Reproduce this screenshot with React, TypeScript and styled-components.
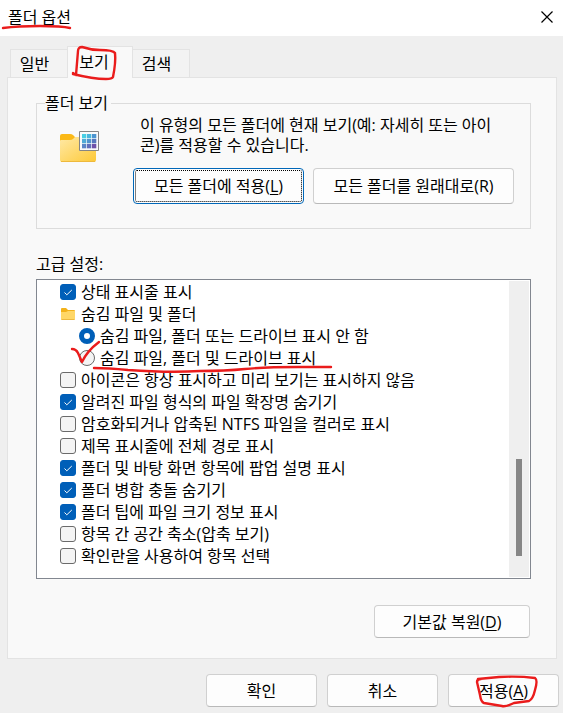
import React, { useState } from "react";
import styled, { createGlobalStyle, css } from "styled-components";

const GlobalStyle = createGlobalStyle`
  *, *::before, *::after { box-sizing: border-box; }
  body {
    margin: 0;
    background: #efefef;
    color: #000;
    font-family: "Open Sans", "Noto Sans CJK KR", sans-serif;
    font-size: 16px;
    line-height: 20px;
  }
  button, input { font: inherit; color: inherit; margin: 0; }
`;

const Dialog = styled.main`
  display: flex;
  flex-direction: column;
  min-height: 100vh;
  background: #efefef;
`;

const TitleBar = styled.header`
  display: flex;
  align-items: center;
  justify-content: space-between;
  height: 36px;
  padding: 0 10px 2px 8px;
  background: #fff;
`;

const Title = styled.h1`
  position: relative;
  margin: 0;
  font-size: 16px;
  font-weight: 400;
`;

const CloseButton = styled.button`
  display: flex;
  padding: 0;
  border: 0;
  background: none;
`;

const Body = styled.div`
  flex: 1;
  display: flex;
  flex-direction: column;
  padding: 10px 6px 0 7px;
`;

const TabList = styled.div`
  display: flex;
  align-items: flex-end;
  padding-left: 3px;
`;

const Tab = styled.button<{ $active?: boolean }>`
  position: relative;
  width: ${(p) => (p.$active ? 66 : 58)}px;
  height: 28px;
  padding: 0 9px 0 0;
  border: 1px solid #e3e3e3;
  border-bottom: 0;
  background: #f3f3f3;
  & + & { margin-left: -1px; }
  ${(p) =>
    p.$active &&
    css`
      z-index: 1;
      height: 32px;
      margin-bottom: -1px;
      padding: 0 12px 2px 0;
      background: #f9f9f9;
    `}
`;

const Panel = styled.section`
  display: flex;
  flex-direction: column;
  padding: 15px 25px 20px 28px;
  border: 1px solid #e3e3e3;
  background: #f9f9f9;
`;

const Group = styled.fieldset`
  min-width: 0;
  margin: 0;
  padding: 2px 16px 24px 96px;
  border: 1px solid #dcdcdc;
  display: grid;
  row-gap: 13px;
  position: relative;
`;

const Legend = styled.legend`
  margin-left: -88px;
  padding: 0 3px 0 0;
`;

const GroupIcon = styled.svg`
  position: absolute;
  left: 22px;
  top: 18px;
`;

const Description = styled.p`
  margin: 0;
  padding: 0 10px 0 7px;
`;

const ButtonRow = styled.div<{ $gap: number }>`
  display: flex;
  gap: ${(p) => p.$gap}px;
`;

const PushButton = styled.button<{ $width: number; $tall?: boolean; $focused?: boolean }>`
  position: relative;
  width: ${(p) => p.$width}px;
  height: ${(p) => (p.$tall ? 36 : 33)}px;
  padding: 0;
  border: 1px solid #d0d0d0;
  border-bottom-color: #b9b9b9;
  border-radius: 4px;
  background: #fdfdfd;
  white-space: nowrap;
  ${(p) =>
    p.$focused &&
    css`
      border-color: #0067b8;
      outline: 1px dotted #000;
      outline-offset: -3px;
    `}
  u { text-underline-offset: 2px; text-decoration-thickness: 1px; }
`;

const ListLabel = styled.h2`
  margin: 25px 0 5px;
  font-size: 16px;
  font-weight: 400;
`;

const ListBox = styled.div`
  display: flex;
  min-height: 300px;
  padding: 1px;
  border: 1px solid #828790;
  background: #fff;
`;

const Rows = styled.ul`
  flex: 1;
  min-width: 0;
  margin: 0;
  padding: 0 0 0 22px;
  list-style: none;
`;

const Row = styled.li<{ $nested?: boolean }>`
  position: relative;
  display: flex;
  align-items: center;
  height: 22px;
  padding-left: ${(p) => (p.$nested ? 19 : 0)}px;
`;

const RowLabel = styled.label`
  display: flex;
  align-items: center;
  gap: 5px;
  white-space: nowrap;
`;

const Mark = styled.span`
  display: grid;
  width: 16px;
  height: 16px;
  > * { grid-area: 1 / 1; }
  svg { pointer-events: none; }
`;

const CheckInput = styled.input`
  appearance: none;
  width: 16px;
  height: 16px;
  border: 1px solid #6a6a6a;
  border-radius: 3px;
  background: #f4f4f4;
  &:checked { border-color: #005fb8; background: #005fb8; }
`;

const RadioInput = styled(CheckInput)`
  border-radius: 50%;
  &:checked { border-width: 5px; background: #fff; }
`;

const ScrollTrack = styled.div`
  display: flex;
  flex-direction: column;
  align-items: center;
  width: 20px;
  background: #efefef;
`;

const ScrollSpace = styled.span<{ $share: number }>`
  flex: ${(p) => p.$share} 0 0;
`;

const ScrollThumb = styled.span`
  flex: 97 0 0;
  width: 6px;
  background: #868686;
`;

const RestoreRow = styled.div`
  display: flex;
  justify-content: flex-end;
  padding: 26px 1px 0 0;
`;

const Footer = styled.footer`
  display: flex;
  justify-content: flex-end;
  gap: 10px;
  padding: 15px 4px 6px;
`;

const Ink = styled.svg`
  position: absolute;
  left: 0;
  top: 0;
  z-index: 2;
  overflow: visible;
  pointer-events: none;
  fill: none;
  stroke: #ea1c1c;
  stroke-width: 2.4;
  stroke-linecap: round;
  stroke-linejoin: round;
`;

function InkMark({ d }: { d: string }) {
  return (
    <Ink width="1" height="1" aria-hidden="true">
      <path d={d} />
    </Ink>
  );
}

function FolderViewIcon() {
  const cells = [
    ["#48cfe4", "#48b6dc", "#4b94cf"],
    ["#51abd6", "#5294cd", "#5677bd"],
    ["#5b86c7", "#626fbb", "#6e51a8"],
  ];
  return (
    <GroupIcon width="40" height="32" viewBox="0 0 40 32" aria-hidden="true">
      <defs>
        <linearGradient id="folderFace" x1="0" y1="0" x2="1" y2="1">
          <stop offset="0" stopColor="#ffe9a6" />
          <stop offset="1" stopColor="#fdc937" />
        </linearGradient>
      </defs>
      <path d="M1 10V5Q1 3 3 3h8q2 0 3 1l3 3h18q2 0 2 2v8H1z" fill="#fbb917" />
      <path d="M1 10q0-1 1-1h9q2 0 3-1l2-2h19q2 0 2 2v21q0 2-2 2H3q-2 0-2-2z" fill="url(#folderFace)" />
      <path d="M2 30.500h34" stroke="#eeb93c" />
      <path d="M20.500.500h19v19h-19z" fill="#fafafa" stroke="#858585" />
      {cells.map((row, y) =>
        row.map((fill, x) => (
          <rect key={`${x}-${y}`} x={23 + x * 5} y={3 + y * 5} width="4.300" height="4.300" fill={fill} />
        ))
      )}
    </GroupIcon>
  );
}

function SmallFolder() {
  return (
    <svg width="16" height="16" viewBox="0 0 16 16" aria-hidden="true">
      <path d="M1 4V3q0-1 1-1h4l2 2h6q1 0 1 1v4H1z" fill="#f3b21b" />
      <path d="M1 6h5l2-1h7v8q0 1-1 1H2q-1 0-1-1z" fill="#ffd767" />
      <path d="M1.500 13.500h13" stroke="#edb941" />
    </svg>
  );
}

type Item = { kind: "check" | "radio" | "folder"; text: string; on?: boolean; ink?: string[] };

const ITEMS: Item[] = [
  { kind: "check", text: "상태 표시줄 표시", on: true },
  { kind: "folder", text: "숨김 파일 및 폴더" },
  { kind: "radio", text: "숨김 파일, 폴더 또는 드라이브 표시 안 함", on: true },
  {
    kind: "radio",
    text: "숨김 파일, 폴더 및 드라이브 표시",
    ink: ["M12 2Q16 2 18 6L22 15Q27 4 39-5", "M34 21Q48 21 68 23Q110 26 140 24Q165 24 185 22T238 20L271 20"],
  },
  { kind: "check", text: "아이콘은 항상 표시하고 미리 보기는 표시하지 않음" },
  { kind: "check", text: "알려진 파일 형식의 파일 확장명 숨기기", on: true },
  { kind: "check", text: "암호화되거나 압축된 NTFS 파일을 컬러로 표시" },
  { kind: "check", text: "제목 표시줄에 전체 경로 표시" },
  { kind: "check", text: "폴더 및 바탕 화면 항목에 팝업 설명 표시", on: true },
  { kind: "check", text: "폴더 병합 충돌 숨기기", on: true },
  { kind: "check", text: "폴더 팁에 파일 크기 정보 표시", on: true },
  { kind: "check", text: "항목 간 공간 축소(압축 보기)" },
  { kind: "check", text: "확인란을 사용하여 항목 선택" },
];

function OptionRow({ item }: { item: Item }) {
  const [on, setOn] = useState(!!item.on);
  if (item.kind === "folder") {
    return (
      <Row>
        <RowLabel as="span">
          <SmallFolder />
          {item.text}
        </RowLabel>
      </Row>
    );
  }
  if (item.kind === "radio") {
    return (
      <Row $nested>
        <RowLabel>
          <Mark>
            <RadioInput type="radio" name="hidden-files" defaultChecked={item.on} />
          </Mark>
          {item.text}
        </RowLabel>
        {item.ink?.map((d) => <InkMark key={d} d={d} />)}
      </Row>
    );
  }
  return (
    <Row>
      <RowLabel>
        <Mark>
          <CheckInput type="checkbox" checked={on} onChange={(e) => setOn(e.target.checked)} />
          {on && (
            <svg width="16" height="16" viewBox="0 0 16 16" aria-hidden="true">
              <path d="M4.500 8.500l2.300 2.300L11.800 6" fill="none" stroke="#fff" strokeWidth="1" />
            </svg>
          )}
        </Mark>
        {item.text}
      </RowLabel>
    </Row>
  );
}

export default function App() {
  return (
    <Dialog>
      <GlobalStyle />
      <TitleBar>
        <Title>
          폴더 옵션
          <InkMark d="M-5 21Q10 19 32 19T62 21" />
        </Title>
        <CloseButton type="button" aria-label="닫기">
          <svg width="12" height="12" viewBox="0 0 12 12" aria-hidden="true">
            <path d="M.5.5l11 11M11.500.5l-11 11" stroke="#000" strokeWidth="1.200" />
          </svg>
        </CloseButton>
      </TitleBar>
      <Body>
        <TabList role="tablist">
          <Tab type="button" role="tab" aria-selected="false">일반</Tab>
          <Tab type="button" role="tab" aria-selected="true" $active>
            보기
            <InkMark d="M5 26L8 28L10 4Q10 0 14 0Q23 3 32 3Q45 3 47 6Q48 15 45 30Q44 32 38 32Q25 32 5 27" />
          </Tab>
          <Tab type="button" role="tab" aria-selected="false">검색</Tab>
        </TabList>
        <Panel role="tabpanel">
          <Group>
            <Legend>폴더 보기</Legend>
            <FolderViewIcon />
            <Description>
              이 유형의 모든 폴더에 현재 보기(예: 자세히 또는 아이콘)를 적용할 수 있습니다.
            </Description>
            <ButtonRow $gap={9}>
              <PushButton type="button" $width={171} $tall $focused>
                모든 폴더에 적용(<u>L</u>)
              </PushButton>
              <PushButton type="button" $width={201} $tall>
                모든 폴더를 원래대로(R)
              </PushButton>
            </ButtonRow>
          </Group>
          <ListLabel id="advanced">고급 설정:</ListLabel>
          <ListBox role="group" aria-labelledby="advanced">
            <Rows>
              {ITEMS.map((item) => (
                <OptionRow key={item.text} item={item} />
              ))}
            </Rows>
            <ScrollTrack aria-hidden="true">
              <ScrollSpace $share={178} />
              <ScrollThumb />
              <ScrollSpace $share={21} />
            </ScrollTrack>
          </ListBox>
          <RestoreRow>
            <PushButton type="button" $width={156}>
              기본값 복원(<u>D</u>)
            </PushButton>
          </RestoreRow>
        </Panel>
      </Body>
      <Footer>
        <PushButton type="button" $width={111}>확인</PushButton>
        <PushButton type="button" $width={111}>취소</PushButton>
        <PushButton type="button" $width={111}>
          적용(<u>A</u>)
          <InkMark d="M29 4L50 2Q70 1 86 3Q89 5 86 15Q84 24 80 26L65 28Q57 32 53 31L35 28Q32 27 31 20L28 7Q28 4 32 4" />
        </PushButton>
      </Footer>
    </Dialog>
  );
}
